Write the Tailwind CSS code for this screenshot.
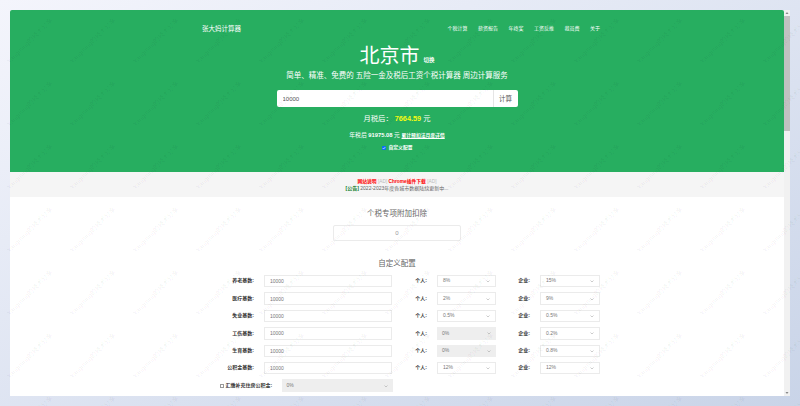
<!DOCTYPE html>
<html lang="zh-CN">
<head>
    <meta charset="UTF-8">
    <title>张大妈计算器</title>
    <script src="https://cdn.jsdelivr.net/npm/@tailwindcss/browser@4"></script>
</head>
<body class="relative h-[406px] w-[800px] overflow-hidden bg-gradient-to-br from-[#f4f5fc] to-[#c9d4e8] font-['Liberation_Sans','Noto_Sans_CJK_SC',sans-serif] text-[#666]">
    <div class="flex pt-[10px] pl-[10px]">
        <!-- Page -->
        <main class="h-[386px] w-[774px] overflow-hidden rounded-t-[2px] bg-white">
            <!-- Green header -->
            <header class="h-[162px] bg-[#27ae60] text-white">
                <nav class="flex h-[35px] items-center justify-between pt-[2px] pr-[184px] pl-[192px]">
                    <a class="text-[6.5px]">张大妈计算器</a>
                    <div class="flex gap-[10.5px] text-[5px]">
                        <a>个税计算</a>
                        <a>薪资报告</a>
                        <a>年终奖</a>
                        <a>工资反推</a>
                        <a>裁员费</a>
                        <a>关于</a>
                    </div>
                </nav>
                <div class="flex flex-col items-center">
                    <div class="flex h-[24px] items-start gap-[4px] pt-[1px] text-[20px] leading-[20px]">
                        <span>北京市</span>
                        <span class="mt-[11px] text-[5.5px] leading-[6px] font-bold">切换</span>
                    </div>
                    <p class="mt-[1px] text-[7.5px] leading-[11px]">简单、精准、免费的 五险一金及税后工资个税计算器 周边计算服务</p>
                    <!-- Salary input -->
                    <div class="mt-[9px] flex h-[17px] w-[241px] items-center rounded-[2px] bg-white text-[#555]">
                        <input class="h-full min-w-0 flex-1 pl-[6px] text-[6px] outline-none" value="10000">
                        <button class="h-full w-[25px] border-l border-[#e5e5e5] text-[6.5px]">计算</button>
                    </div>
                    <p class="mt-[7px] text-[7.3px] leading-[10px]">月税后： <b class="text-[#f6fb10]">7664.59</b> 元</p>
                    <p class="mt-[6px] text-[5.8px] leading-[10px]">年税后 <b>91975.08</b> 元 <a class="text-[4.8px] font-bold underline">累计预扣法月度详情</a></p>
                    <label class="mt-[3px] flex items-center gap-[3px] text-[4.8px] leading-[7px] font-bold">
                        <span class="flex h-[4px] w-[4px] items-center justify-center rounded-[1px] bg-[#0d6efd]">
                            <svg viewBox="0 0 8 8" class="h-[4px] w-[4px]"><path d="M1.5 4.2 3.2 6 6.5 2.2" fill="none" stroke="white" stroke-width="1.3"/></svg>
                        </span>
                        自定义配置
                    </label>
                </div>
            </header>

            <!-- Notice -->
            <section class="flex h-[25px] flex-col items-center justify-center bg-[#f5f5f5] text-[5px] leading-[7px]">
                <p class="text-[4.8px]"><b class="text-[#f00]">网站说明</b> <span class="text-[#bbb]">[AD]</span> <b class="text-[#f00]">Chrome插件下载</b> <span class="text-[#bbb]">[AD]</span></p>
                <p><b class="text-[#0a7a1e]">[公告]</b> 2022-2023年度各城市数据陆续更新中...</p>
            </section>

            <!-- Deduction -->
            <section class="flex flex-col items-center">
                <h2 class="mt-[12px] text-[7.5px] leading-[10px]">个税专项附加扣除</h2>
                <input class="mt-[6px] h-[16px] w-[128px] rounded-[2px] border border-[#ebebeb] text-center text-[6px] text-[#999] outline-none" value="0">
                <h2 class="mt-[18px] text-[7.5px] leading-[10px]">自定义配置</h2>
            </section>

            <!-- Config rows -->
            <section class="mt-[6px] ml-[192px] flex w-[398px] flex-col gap-[5px] text-[5px] text-[#777]">
                <div class="flex h-[12.4px] items-center">
                    <b class="w-[52px] text-right text-[#333]">养老基数:</b>
                    <input class="ml-[10px] h-full w-[128px] border border-[#ebebeb] pl-[5px] outline-none" value="10000">
                    <b class="w-[35px] text-right text-[#333]">个人:</b>
                    <div class="ml-[10px] flex h-full w-[59px] items-center justify-between border border-[#ebebeb] px-[5px]">8%<svg viewBox="0 0 8 8" class="h-[4px] w-[4px]"><path d="M1 3 4 6 7 3" fill="none" stroke="#999"/></svg></div>
                    <b class="w-[34px] text-right text-[#333]">企业:</b>
                    <div class="ml-[10px] flex h-full w-[60px] items-center justify-between border border-[#ebebeb] px-[5px]">15%<svg viewBox="0 0 8 8" class="h-[4px] w-[4px]"><path d="M1 3 4 6 7 3" fill="none" stroke="#999"/></svg></div>
                </div>
                <div class="flex h-[12.4px] items-center">
                    <b class="w-[52px] text-right text-[#333]">医疗基数:</b>
                    <input class="ml-[10px] h-full w-[128px] border border-[#ebebeb] pl-[5px] outline-none" value="10000">
                    <b class="w-[35px] text-right text-[#333]">个人:</b>
                    <div class="ml-[10px] flex h-full w-[59px] items-center justify-between border border-[#ebebeb] px-[5px]">2%<svg viewBox="0 0 8 8" class="h-[4px] w-[4px]"><path d="M1 3 4 6 7 3" fill="none" stroke="#999"/></svg></div>
                    <b class="w-[34px] text-right text-[#333]">企业:</b>
                    <div class="ml-[10px] flex h-full w-[60px] items-center justify-between border border-[#ebebeb] px-[5px]">9%<svg viewBox="0 0 8 8" class="h-[4px] w-[4px]"><path d="M1 3 4 6 7 3" fill="none" stroke="#999"/></svg></div>
                </div>
                <div class="flex h-[12.4px] items-center">
                    <b class="w-[52px] text-right text-[#333]">失业基数:</b>
                    <input class="ml-[10px] h-full w-[128px] border border-[#ebebeb] pl-[5px] outline-none" value="10000">
                    <b class="w-[35px] text-right text-[#333]">个人:</b>
                    <div class="ml-[10px] flex h-full w-[59px] items-center justify-between border border-[#ebebeb] px-[5px]">0.5%<svg viewBox="0 0 8 8" class="h-[4px] w-[4px]"><path d="M1 3 4 6 7 3" fill="none" stroke="#999"/></svg></div>
                    <b class="w-[34px] text-right text-[#333]">企业:</b>
                    <div class="ml-[10px] flex h-full w-[60px] items-center justify-between border border-[#ebebeb] px-[5px]">0.5%<svg viewBox="0 0 8 8" class="h-[4px] w-[4px]"><path d="M1 3 4 6 7 3" fill="none" stroke="#999"/></svg></div>
                </div>
                <div class="flex h-[12.4px] items-center">
                    <b class="w-[52px] text-right text-[#333]">工伤基数:</b>
                    <input class="ml-[10px] h-full w-[128px] border border-[#ebebeb] pl-[5px] outline-none" value="10000">
                    <b class="w-[35px] text-right text-[#333]">个人:</b>
                    <div class="ml-[10px] flex h-full w-[59px] items-center justify-between bg-[#eee] px-[5px]">0%<svg viewBox="0 0 8 8" class="h-[4px] w-[4px]"><path d="M1 3 4 6 7 3" fill="none" stroke="#999"/></svg></div>
                    <b class="w-[34px] text-right text-[#333]">企业:</b>
                    <div class="ml-[10px] flex h-full w-[60px] items-center justify-between border border-[#ebebeb] px-[5px]">0.2%<svg viewBox="0 0 8 8" class="h-[4px] w-[4px]"><path d="M1 3 4 6 7 3" fill="none" stroke="#999"/></svg></div>
                </div>
                <div class="flex h-[12.4px] items-center">
                    <b class="w-[52px] text-right text-[#333]">生育基数:</b>
                    <input class="ml-[10px] h-full w-[128px] border border-[#ebebeb] pl-[5px] outline-none" value="10000">
                    <b class="w-[35px] text-right text-[#333]">个人:</b>
                    <div class="ml-[10px] flex h-full w-[59px] items-center justify-between bg-[#eee] px-[5px]">0%<svg viewBox="0 0 8 8" class="h-[4px] w-[4px]"><path d="M1 3 4 6 7 3" fill="none" stroke="#999"/></svg></div>
                    <b class="w-[34px] text-right text-[#333]">企业:</b>
                    <div class="ml-[10px] flex h-full w-[60px] items-center justify-between border border-[#ebebeb] px-[5px]">0.8%<svg viewBox="0 0 8 8" class="h-[4px] w-[4px]"><path d="M1 3 4 6 7 3" fill="none" stroke="#999"/></svg></div>
                </div>
                <div class="flex h-[12.4px] items-center">
                    <b class="w-[52px] text-right text-[#333]">公积金基数:</b>
                    <input class="ml-[10px] h-full w-[128px] border border-[#ebebeb] pl-[5px] outline-none" value="10000">
                    <b class="w-[35px] text-right text-[#333]">个人:</b>
                    <div class="ml-[10px] flex h-full w-[59px] items-center justify-between border border-[#ebebeb] px-[5px]">12%<svg viewBox="0 0 8 8" class="h-[4px] w-[4px]"><path d="M1 3 4 6 7 3" fill="none" stroke="#999"/></svg></div>
                    <b class="w-[34px] text-right text-[#333]">企业:</b>
                    <div class="ml-[10px] flex h-full w-[60px] items-center justify-between border border-[#ebebeb] px-[5px]">12%<svg viewBox="0 0 8 8" class="h-[4px] w-[4px]"><path d="M1 3 4 6 7 3" fill="none" stroke="#999"/></svg></div>
                </div>
                <div class="flex h-[12.4px] items-center">
                    <span class="ml-[18px] h-[4px] w-[3.5px] border-[0.5px] border-[#999]"></span>
                    <b class="ml-[2px] w-[47px] whitespace-nowrap text-[#333]">汇缴补充住房公积金:</b>
                    <div class="ml-[9px] flex h-full w-[111px] items-center justify-between bg-[#eee] px-[5px]">0%<svg viewBox="0 0 8 8" class="h-[4px] w-[4px]"><path d="M1 3 4 6 7 3" fill="none" stroke="#999"/></svg></div>
                </div>
            </section>
        </main>

        <!-- Scrollbar -->
        <div class="flex h-[386px] w-[6px] flex-col bg-[#f1f1f1]">
            <svg viewBox="0 0 6 6" class="h-[6px] w-[6px]"><path d="M1.5 3.8 3 2.2 4.5 3.8z" fill="#666"/></svg>
            <div class="h-[115px] w-full bg-[#c1c1c1]"></div>
            <svg viewBox="0 0 6 6" class="mt-auto h-[6px] w-[6px]"><path d="M1.5 2.2 3 3.8 4.5 2.2z" fill="#666"/></svg>
        </div>
    </div>

    <!-- Watermark -->
    <div id="watermark" class="pointer-events-none absolute inset-0 overflow-hidden"></div>
    <template id="mark"><span class="absolute -rotate-45 whitespace-nowrap text-[6.5px] text-black/[0.07]">Yangming的技术分享</span></template>
    <script>
        // Tile the watermark across the page
        const layer = document.getElementById("watermark");
        const mark = document.getElementById("mark");
        for (let y = -27; y < 420; y += 63) {
            for (let x = -1.5; x < 800; x += 63) {
                const el = mark.content.firstElementChild.cloneNode(true);
                el.style.left = x + "px";
                el.style.top = y + "px";
                layer.appendChild(el);
            }
        }
    </script>
</body>
</html>
